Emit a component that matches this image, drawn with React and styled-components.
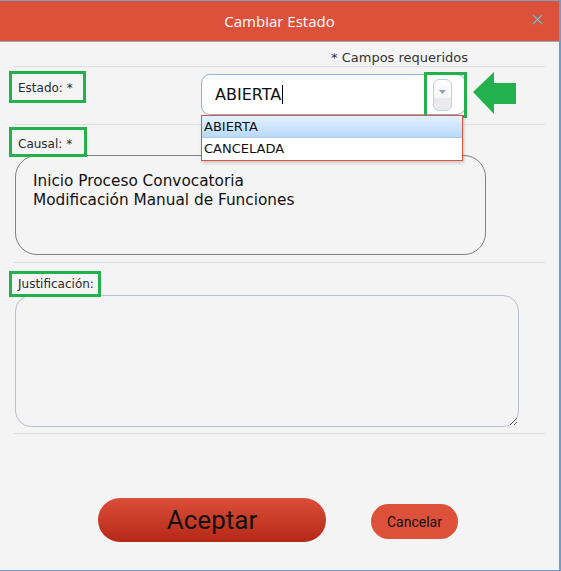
import React from "react";
import styled, { createGlobalStyle } from "styled-components";

const Global = createGlobalStyle`
  html, body { margin: 0; padding: 0; background: #f4f4f4; }
  * { box-sizing: border-box; }
`;

const Dialog = styled.div`
  width: 561px;
  height: 571px;
  border-top: 1px solid #7aa2c6;
  border-right: 2px solid #6c9cc7;
  border-bottom: 1px solid #6c9cc7;
  background: #f4f4f4;
  display: flex;
  flex-direction: column;
  font-family: "DejaVu Sans", Verdana, sans-serif;
  color: #222;
`;

const Header = styled.div`
  height: 41px;
  flex: none;
  background: #dd513a;
  border-bottom: 1px solid #9aaab8;
  display: grid;
  grid-template-columns: 1fr auto 1fr;
  align-items: center;
`;

const Title = styled.div`
  grid-column: 2;
  color: #fff;
  font-family: "Open Sans", sans-serif;
  font-size: 15px;
  padding-bottom: 1px;
`;

const Close = styled.div`
  grid-column: 3;
  justify-self: end;
  margin-right: 16px;
  margin-bottom: 4px;
  width: 11px;
  height: 11px;
  display: flex;
`;

const Body = styled.div`
  flex: 1;
  display: flex;
  flex-direction: column;
  padding: 0 14px 0 14px;
`;

const NoteRow = styled.div`
  height: 25px;
  border-bottom: 1px solid #dedede;
  display: flex;
  justify-content: flex-end;
  align-items: flex-end;
  padding: 0 77px 1px 0;
  font-size: 13px;
  color: #333;
`;

const Row = styled.div`
  position: relative;
  height: ${(p) => p.$h}px;
  border-bottom: 1px solid #dedede;
  display: flex;
  flex-direction: ${(p) => (p.$col ? "column" : "row")};
  align-items: flex-start;
`;

const Label = styled.div`
  border: 3px solid #22b14c;
  margin: ${(p) => p.$mt}px 0 0 -5px;
  width: ${(p) => p.$w}px;
  height: ${(p) => p.$hh}px;
  padding: ${(p) => p.$pt}px 0 0 6px;
  font-size: 12px;
  line-height: 14px;
  color: #2a2a2a;
  white-space: nowrap;
  position: relative;
  z-index: 1;
`;

const SelectWrap = styled.div`
  position: relative;
  margin: 7px 0 0 115px;
  width: 265px;
  height: 41px;
`;

const SelectBox = styled.div`
  width: 100%;
  height: 100%;
  background: #fff;
  border: 1px solid #8eb1d4;
  border-radius: 9px;
  display: flex;
  align-items: center;
  padding-left: 13px;
  font-size: 16px;
  color: #111;
`;

const Caret = styled.span`
  display: inline-block;
  width: 1px;
  height: 19px;
  background: #000;
  margin-left: 1px;
`;

const DropBtn = styled.div`
  position: absolute;
  left: 232px;
  top: 5px;
  width: 19px;
  height: 32px;
  border: 1px solid #bfcfe2;
  border-radius: 6px;
  background: linear-gradient(#fdfdfd 0%, #f6f6f7 60%, #e9e9ec 62%, #ececee 100%);
  display: flex;
  justify-content: center;
  padding-top: 10px;
`;

const Highlight = styled.div`
  position: absolute;
  left: 223px;
  top: -2px;
  width: 43px;
  height: 46px;
  border: 3px solid #22b14c;
`;

const Arrow = styled.svg`
  position: absolute;
  left: 272px;
  top: -2px;
`;

const List = styled.div`
  position: absolute;
  left: 0;
  top: 41px;
  width: 262px;
  background: #fff;
  border: 1px solid #e2533d;
  box-shadow: 1px 2px 3px rgba(0, 0, 0, 0.18);
  z-index: 2;
`;

const Item = styled.div`
  height: 22px;
  line-height: 22px;
  padding-left: 2px;
  font-size: 13px;
  color: #111;
  background: ${(p) =>
    p.$active ? "linear-gradient(#e3f0fd, #b9dafa)" : "#fff"};
  border-bottom: ${(p) => (p.$active ? "1px solid #a9c9ec" : "none")};
`;

const CausalBox = styled.div`
  margin: -2px 0 0 1px;
  width: 471px;
  height: 100px;
  border: 1px solid #808080;
  border-radius: 22px;
  padding: 16px 0 0 17px;
  font-size: 15.3px;
  line-height: 19px;
  color: #111;
`;

const TextArea = styled.textarea`
  margin: -2px 0 0 1px;
  width: 504px;
  height: 132px;
  border: 1px solid #b9bfcb;
  border-radius: 16px;
  background: #f4f4f4;
  outline: none;
  font-family: inherit;
`;

const Footer = styled.div`
  flex: 1;
  display: flex;
  align-items: flex-start;
  padding: 64px 0 0 84px;
  gap: 45px;
`;

const Button = styled.button`
  border: none;
  font-family: Roboto, "Liberation Sans", sans-serif;
  color: #111;
  cursor: pointer;
  width: ${(p) => p.$w}px;
  height: ${(p) => p.$h}px;
  border-radius: ${(p) => p.$h / 2}px;
  font-size: ${(p) => p.$fs}px;
  margin-top: ${(p) => p.$mt || 0}px;
  background: ${(p) =>
    p.$primary ? "linear-gradient(#db4e38, #b52816)" : "#dd513a"};
  padding: 0;
`;

export default function App() {
  return (
    <>
      <Global />
      <Dialog>
        <Header>
          <Title>Cambiar Estado</Title>
          <Close>
            <svg width="11" height="11" viewBox="0 0 11 11">
              <path d="M1.5 1.5 L9.5 9.5 M9.5 1.5 L1.5 9.5" stroke="#8a8a8a" strokeWidth="2.2" strokeLinecap="square" />
              <path d="M1.5 1.5 L9.5 9.5 M9.5 1.5 L1.5 9.5" stroke="#b9b9b9" strokeWidth="0.8" />
            </svg>
          </Close>
        </Header>
        <Body>
          <NoteRow>* Campos requeridos</NoteRow>
          <Row $h={58}>
            <Label $mt={4} $w={77} $hh={32} $pt={7}>Estado: *</Label>
            <SelectWrap>
              <SelectBox>
                ABIERTA<Caret />
              </SelectBox>
              <DropBtn>
                <svg width="7" height="4" viewBox="0 0 7 4">
                  <path d="M0 0 H7 L3.5 4 Z" fill="#8ea4c6" />
                </svg>
              </DropBtn>
              <Highlight />
              <Arrow width="43" height="42" viewBox="0 0 43 42">
                <polygon points="0,20 21,0 21,11 43,11 43,32 21,32 21,42" fill="#22b14c" />
              </Arrow>
              <List>
                <Item $active>ABIERTA</Item>
                <Item>CANCELADA</Item>
              </List>
            </SelectWrap>
          </Row>
          <Row $h={138} $col>
            <Label $mt={2} $w={78} $hh={30} $pt={7}>Causal: *</Label>
            <CausalBox>
              Inicio Proceso Convocatoria
              <br />
              Modificación Manual de Funciones
            </CausalBox>
          </Row>
          <Row $h={171} $col>
            <Label $mt={8} $w={92} $hh={26} $pt={3}>Justificación:</Label>
            <TextArea />
          </Row>
          <Footer>
            <Button $primary $w={228} $h={44} $fs={26}>Aceptar</Button>
            <Button $w={87} $h={35} $fs={14} $mt={6}>Cancelar</Button>
          </Footer>
        </Body>
      </Dialog>
    </>
  );
}
